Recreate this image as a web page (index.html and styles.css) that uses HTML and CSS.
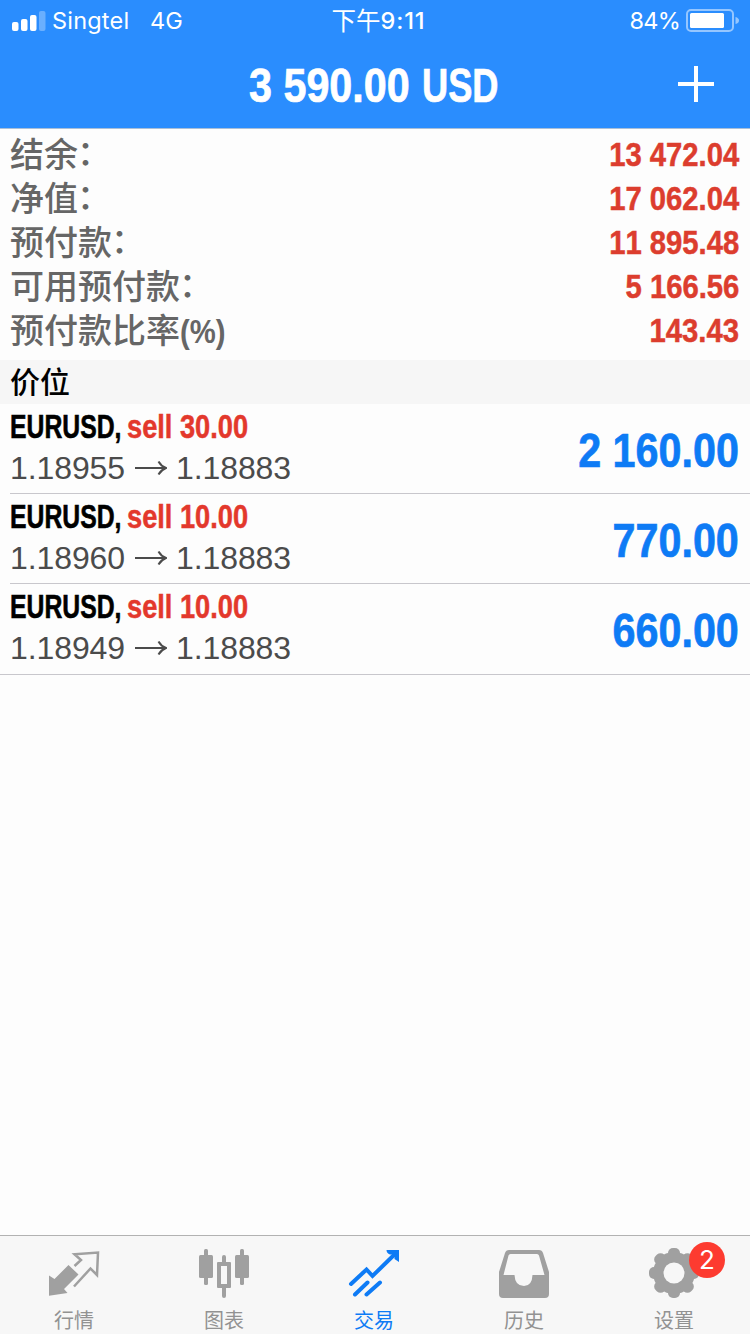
FILE: index.html
```html
<!DOCTYPE html>
<html lang="zh-CN">
<head>
<meta charset="utf-8">
<title>交易</title>
<link rel="stylesheet" href="styles.css">
</head>
<body>
<div class="app">
  <header class="header">
    <div class="status">
      <div class="carrier">
        <svg class="signal" width="34" height="20" viewBox="0 0 34 20" fill="#fff"><rect x="0" y="11" width="6.5" height="9" rx="2"/><rect x="9" y="8" width="6.5" height="12" rx="2"/><rect x="18" y="4" width="6.5" height="16" rx="2"/><rect x="27" y="0" width="6.500" height="20" rx="2" opacity=".3"/></svg>
        <span class="operator">Singtel</span><span class="network">4G</span>
      </div>
      <div class="clock"><span class="ampm">下午</span><span class="time">9:11</span></div>
      <div class="power">
        <span class="percent">84%</span>
        <svg width="53" height="24" viewBox="0 0 53 24"><rect x="1" y="1" width="46" height="21" rx="4" fill="none" stroke="#fff" stroke-opacity=".5" stroke-width="2"/><rect x="4" y="4" width="34" height="15" rx="1.5" fill="#fff"/><path d="M49.500 8Q53 9 53 11.500Q53 14 49.500 15Z" fill="#fff" opacity=".5"/></svg>
      </div>
    </div>
    <div class="titlebar">
      <h1 class="title"><span class="title-num">3 590.00</span><span class="title-cur">USD</span></h1>
      <svg class="add" width="38" height="38" viewBox="0 0 38 38" stroke="#fff" stroke-width="4"><path d="M19 1V37M1 19H37"/></svg>
    </div>
  </header>

  <section class="summary">
    <div class="line"><span class="label">结余<span class="colon">：</span></span><span class="amount">13 472.04</span></div>
    <div class="line"><span class="label">净值<span class="colon">：</span></span><span class="amount">17 062.04</span></div>
    <div class="line"><span class="label">预付款<span class="colon">：</span></span><span class="amount">11 895.48</span></div>
    <div class="line"><span class="label">可用预付款<span class="colon">：</span></span><span class="amount">5 166.56</span></div>
    <div class="line"><span class="label">预付款比率<span class="unit">(%)</span></span><span class="amount">143.43</span></div>
  </section>

  <h2 class="section"><span>价位</span></h2>
  <ul class="positions">
    <li class="position">
      <div class="detail">
        <div class="deal"><span class="symbol">EURUSD,</span><span class="side">sell 30.00</span></div>
        <div class="prices"><span>1.18955</span><svg class="arrow" width="32" height="16" viewBox="0 0 32 16"><path d="M0 8H30M23.500 1.500Q26 6 31 8Q26 10 23.500 14.500"/></svg><span>1.18883</span></div>
      </div>
      <span class="profit">2 160.00</span>
    </li>
    <li class="position">
      <div class="detail">
        <div class="deal"><span class="symbol">EURUSD,</span><span class="side">sell 10.00</span></div>
        <div class="prices"><span>1.18960</span><svg class="arrow" width="32" height="16" viewBox="0 0 32 16"><path d="M0 8H30M23.500 1.500Q26 6 31 8Q26 10 23.500 14.500"/></svg><span>1.18883</span></div>
      </div>
      <span class="profit">770.00</span>
    </li>
    <li class="position">
      <div class="detail">
        <div class="deal"><span class="symbol">EURUSD,</span><span class="side">sell 10.00</span></div>
        <div class="prices"><span>1.18949</span><svg class="arrow" width="32" height="16" viewBox="0 0 32 16"><path d="M0 8H30M23.500 1.500Q26 6 31 8Q26 10 23.500 14.500"/></svg><span>1.18883</span></div>
      </div>
      <span class="profit">660.00</span>
    </li>
  </ul>

  <nav class="tabs">
    <a class="tab">
      <svg width="54" height="54" viewBox="0 0 54 54"><path fill="#a0a0a0" d="M2 27.500L7.500 31L21.500 17L31.500 26.500L17 41L20.500 45L2 47.700Z"/><path fill="none" stroke="#a0a0a0" stroke-width="2.500" d="M27.500 18L34 12L27.500 6.300L51 4.500L50 27L43.500 20.500L27 38.500"/></svg>
      <span>行情</span>
    </a>
    <a class="tab">
      <svg width="54" height="54" viewBox="0 0 54 54" fill="#a0a0a0"><rect x="2" y="7" width="14" height="23" rx="1.500"/><rect x="7" y="1" width="4" height="36" rx="1.500"/><rect x="38" y="7" width="14" height="23" rx="1.500"/><rect x="43" y="1" width="4" height="36" rx="1.500"/><path d="M25 9a2 2 0 0 1 4 0V14H33a1 1 0 0 1 1 1V39a1 1 0 0 1-1 1H29V48a2 2 0 0 1-4 0V40H21a1 1 0 0 1-1-1V15a1 1 0 0 1 1-1H25ZM24 18V36H30V18Z" fill-rule="evenodd"/></svg>
      <span>图表</span>
    </a>
    <a class="tab active">
      <svg width="54" height="54" viewBox="0 0 54 54" fill="none" stroke="#0e7bf5" stroke-width="4"><path stroke-linecap="round" d="M4 36L19.500 21.500L25.500 28L48 6M8 46.500L20.500 34.500M19.500 46.500L33 34.500"/><path fill="#0e7bf5" stroke="none" d="M39.500 2H52V14L47.500 11V6.500H43Q39.500 5 39.500 2Z"/></svg>
      <span>交易</span>
    </a>
    <a class="tab">
      <svg width="54" height="54" viewBox="0 0 54 54"><path fill="#a0a0a0" fill-rule="evenodd" d="M12 2H42Q45 2 46 5L52 24V46Q52 50 48 50H6Q2 50 2 46V24L8 5Q9 2 12 2ZM13.500 6Q12 6 11.500 7.500L6.500 27H17.500Q18 38 27 38Q35 38 35.500 27H47.500L42 7.500Q41.500 6 40 6Z"/></svg>
      <span>历史</span>
    </a>
    <a class="tab">
      <span class="badge">2</span>
      <svg width="54" height="54" viewBox="-27 -25 54 54"><g fill="#a0a0a0"><circle r="21"/><rect x="-6" y="-25" width="12" height="50" rx="5"/><rect x="-6" y="-25" width="12" height="50" rx="5" transform="rotate(45)"/><rect x="-6" y="-25" width="12" height="50" rx="5" transform="rotate(90)"/><rect x="-6" y="-25" width="12" height="50" rx="5" transform="rotate(135)"/></g><circle r="10.500" fill="#f7f7f7"/></svg>
      <span>设置</span>
    </a>
  </nav>
</div>
</body>
</html>
```

FILE: styles.css
```css
* { box-sizing: border-box; }
body { margin: 0; background: #fdfdfd; font-family: "Liberation Sans", "Noto Sans CJK SC", sans-serif; font-kerning: none; }
h1, h2, ul { margin: 0; padding: 0; font-weight: inherit; list-style: none; }
svg { display: block; flex: none; }
.app { width: 750px; height: 1334px; display: flex; flex-direction: column; overflow: hidden; }

/* Header */
.header { height: 129px; flex: none; background: #2a8dfe; border-bottom: 1px solid #a9bfd8; color: #fff; }
.status { height: 42px; display: grid; grid-template-columns: 1fr auto 1fr; align-items: center; padding: 0 11px 0 12px; font: 23.5px/42px Inter, "Noto Sans CJK SC", sans-serif; }
.carrier, .power, .clock { display: flex; align-items: center; white-space: nowrap; height: 42px; }
.signal { margin-right: 6px; }
.operator { width: 98px; letter-spacing: .2px; }
.clock { margin-left: 6px; }
.ampm { font-size: 24.5px; }
.time { font-weight: 500; letter-spacing: .9px; }
.power { justify-content: flex-end; gap: 6px; }
.percent { letter-spacing: -.8px; }
.titlebar { height: 84px; display: grid; grid-template-columns: 249px 1fr 38px; align-items: center; padding-right: 35px; }
.title { grid-column: 2; display: flex; padding-top: 3px; font-size: 48px; line-height: 81px; font-weight: 700; white-space: nowrap; -webkit-text-stroke: .7px #fff; }
.title span { transform-origin: left center; }
.title-num { width: 173px; transform: scaleX(.86); }
.title-cur { transform: scaleX(.755); }

/* Account summary */
.summary { height: 231px; flex: none; padding: 2px 10px 0; }
.line { height: 44px; display: flex; justify-content: space-between; font-size: 34px; line-height: 44px; white-space: nowrap; }
.label { color: #666; font-family: "Noto Sans CJK SC", sans-serif; font-weight: 500; }
.colon { display: inline-block; transform: translate(-1px, -2px); }
.unit { display: inline-block; font-family: "Liberation Sans", sans-serif; font-weight: 700; transform: scaleX(.86); transform-origin: left center; }
.amount { padding-top: 1px; color: #dc3d2e; font-weight: 700; -webkit-text-stroke: .5px #dc3d2e; transform: translateX(-1px) scaleX(.86); transform-origin: right center; }

/* Positions */
.section { height: 44px; flex: none; padding-left: 10px; background: #f6f6f6; font: 500 30px/41px "Noto Sans CJK SC", sans-serif; color: #000; }
.position { height: 90px; margin-left: 10px; padding: 4px 10px 0 0; display: flex; justify-content: space-between; border-bottom: 1px solid #c8c7cc; white-space: nowrap; }
.position:last-child { height: 91px; margin-left: 0; padding-left: 10px; }
.deal { display: flex; height: 40px; font-size: 33px; line-height: 38px; font-weight: 700; }
.deal span { transform-origin: left center; }
.symbol { width: 117px; transform: scaleX(.75); -webkit-text-stroke: .6px #000; }
.side { color: #e3382c; transform: scaleX(.825); -webkit-text-stroke: .5px #e3382c; }
.prices { display: flex; align-items: center; height: 40px; font-size: 32px; line-height: 40px; color: #4b4b4b; letter-spacing: -.1px; }
.prices span { width: 115px; }
.arrow { margin: 0 9px 0 10px; fill: none; stroke: #4b4b4b; stroke-width: 2; }
.profit { font-size: 48px; line-height: 86px; font-weight: 700; color: #0e7bf5; -webkit-text-stroke: .7px #0e7bf5; transform: translateX(-1px) scaleX(.86); transform-origin: right center; }

/* Tab bar */
.tabs { height: 99px; flex: none; margin-top: auto; display: grid; grid-template-columns: repeat(5, 1fr); background: #f7f7f7; border-top: 1px solid #b2b2b2; }
.tab { position: relative; display: flex; flex-direction: column; align-items: center; padding: 12px 2px 0 0; color: #929292; font: 20px/31px "Noto Sans CJK SC", sans-serif; }
.tab svg { margin-bottom: 2px; }
.active { color: #0e7bf5; }
.badge { position: absolute; left: 89px; top: 6px; width: 36px; height: 36px; border-radius: 50%; background: #fd3b30; color: #fff; text-align: center; font: 26px/36px Inter, sans-serif; }
```
